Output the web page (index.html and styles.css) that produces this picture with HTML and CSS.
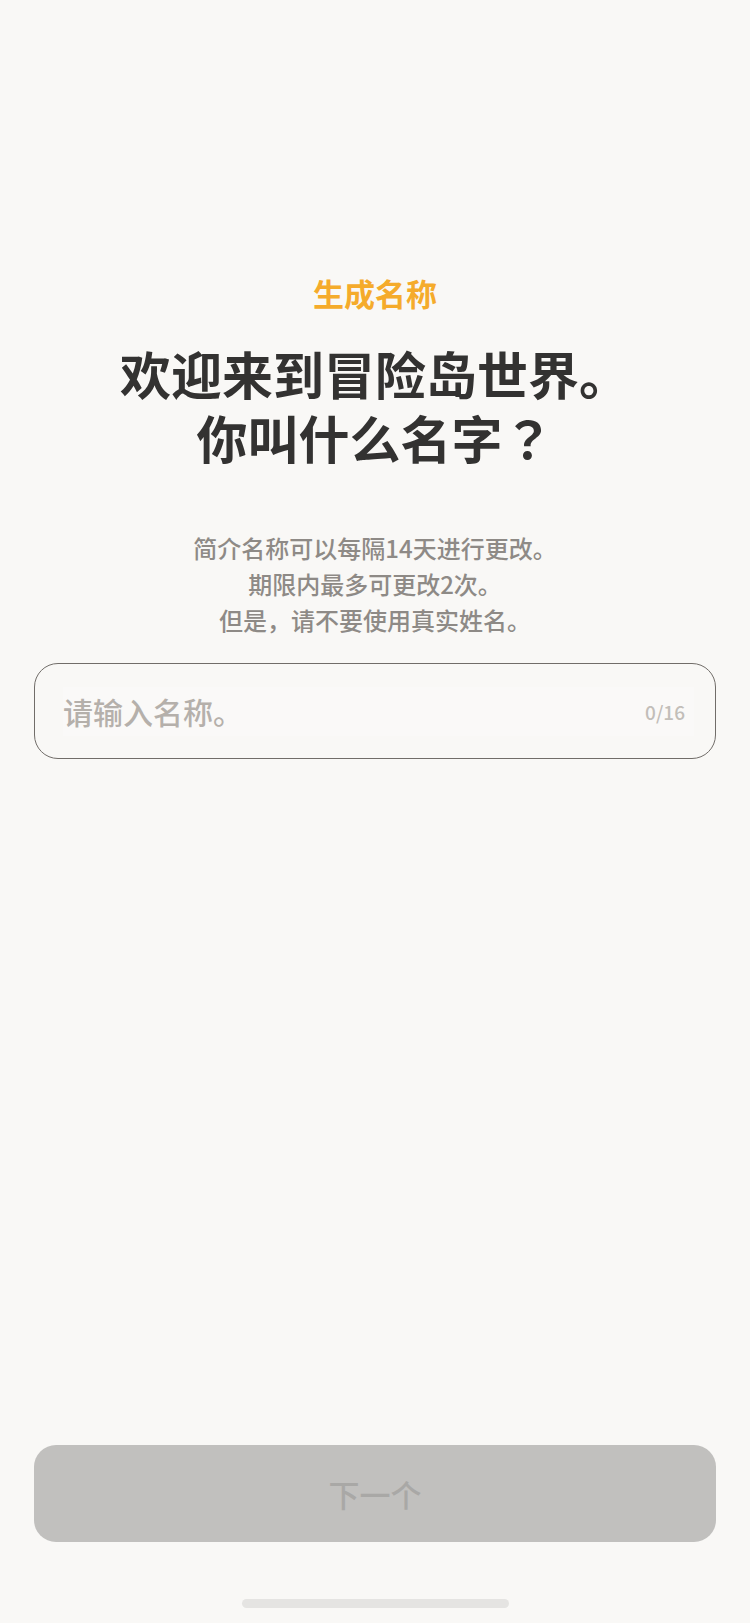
FILE: index.html
```
<!DOCTYPE html>
<html lang="zh-CN">
<head>
<meta charset="utf-8">
<title>生成名称</title>
<link rel="stylesheet" href="styles.css">
</head>
<body>
<main class="page">
  <section class="intro">
    <div class="eyebrow">生成名称</div>
    <h1 class="heading">欢迎来到冒险岛世界。<br>你叫什么名字<span class="fw-punct" lang="ja">？</span></h1>
    <p class="notice">简介名称可以每隔14天进行更改。<br>期限内最多可更改2次。<br>但是，请不要使用真实姓名。</p>
  </section>
  <label class="field">
    <span class="field-inner">
      <input class="field-input" type="text" placeholder="请输入名称。" maxlength="16">
      <span class="field-count">0/16</span>
    </span>
  </label>
  <button class="next-btn" type="button" disabled>下一个</button>
  <div class="home-indicator"></div>
</main>
</body>
</html>
```

FILE: styles.css
```
* { box-sizing: border-box; }

html, body {
  margin: 0;
  padding: 0;
  background: #f9f8f6;
}

body {
  font-family: "Noto Sans CJK SC", "Noto Sans", sans-serif;
}

.page {
  height: 1623px;
  display: flex;
  flex-direction: column;
  padding: 273px 34px 15px;
}

.intro {
  display: flex;
  flex-direction: column;
  align-items: center;
  text-align: center;
}

.eyebrow {
  font-size: 31px;
  line-height: 40px;
  font-weight: 700;
  color: #f5ab2b;
}

.heading {
  margin: 28px 0 0;
  font-size: 51px;
  line-height: 64px;
  font-weight: 700;
  color: #333231;
}

.fw-punct {
  font-family: "Noto Sans CJK JP", "Noto Sans CJK SC", sans-serif;
}

.notice {
  margin: 61px 0 0;
  font-size: 24px;
  line-height: 36px;
  font-weight: 500;
  color: #8e8a86;
}

.field {
  margin-top: 25px;
  height: 96px;
  border: 1.5px solid #716d69;
  border-radius: 24px;
  display: flex;
  align-items: center;
  padding: 0 21px 0 28px;
}

.field-inner {
  flex: 1;
  height: 49px;
  display: flex;
  align-items: center;
  gap: 12px;
  padding-right: 9px;
  background: #faf9f8;
}

.field-input {
  flex: 1;
  min-width: 0;
  border: none;
  outline: none;
  background: transparent;
  font-family: "Noto Sans CJK SC", "Noto Sans", sans-serif;
  font-size: 30px;
  font-weight: 500;
  line-height: 48px;
  height: 48px;
  padding: 0;
  color: #333231;
}

.field-input::placeholder {
  color: #b5b0ab;
  opacity: 1;
}

.field-count {
  font-size: 19px;
  font-weight: 500;
  color: #c2beb9;
}

.next-btn {
  margin-top: auto;
  height: 97px;
  border: none;
  border-radius: 22px;
  background: #c1c0be;
  color: #a9a8a6;
  font-family: "Noto Sans CJK SC", "Noto Sans", sans-serif;
  font-size: 31px;
  font-weight: 500;
  padding: 0;
}

.home-indicator {
  align-self: center;
  margin-top: 57px;
  width: 267px;
  height: 9px;
  border-radius: 5px;
  background: #e5e4e2;
}
```
